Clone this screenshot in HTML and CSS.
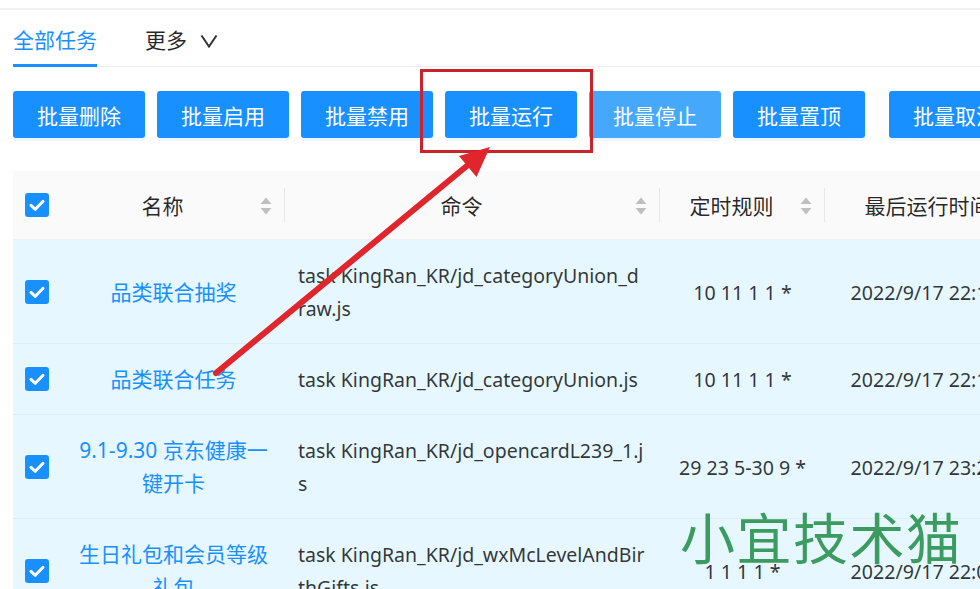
FILE: index.html
```html
<!DOCTYPE html>
<html lang="zh-CN">
<head>
<meta charset="utf-8">
<title>任务</title>
<link rel="stylesheet" href="styles.css">
</head>
<body>
<div class="page">
  <div class="topbar"></div>
  <div class="tabs">
    <div class="tab active">全部任务</div>
    <div class="tab more">更多
      <svg class="chev" width="18" height="14" viewBox="0 0 18 14"><path d="M1.5 1.5 L9 12.5 L16.5 1.5" fill="none" stroke="#333" stroke-width="2"/></svg>
    </div>
  </div>
  <div class="toolbar">
    <button class="btn">批量删除</button>
    <button class="btn">批量启用</button>
    <button class="btn">批量禁用</button>
    <button class="btn">批量运行</button>
    <button class="btn hover">批量停止</button>
    <button class="btn">批量置顶</button>
    <button class="btn wide">批量取消置顶</button>
  </div>
  <table class="grid">
    <colgroup>
      <col class="c-check"><col class="c-name"><col class="c-cmd"><col class="c-sched"><col class="c-last">
    </colgroup>
    <thead>
      <tr>
        <th class="check"><span class="cb"><svg width="24" height="24" viewBox="0 0 24 24"><path d="M6 12.3 L10.3 16.3 L18 8.3" fill="none" stroke="#fff" stroke-width="3" stroke-linecap="round" stroke-linejoin="round"/></svg></span></th>
        <th><div class="th"><span class="title">名称</span><span class="sorter"><svg width="12" height="18" viewBox="0 0 12 18"><path d="M6 0.5 L11.5 7 L0.5 7 Z M6 17.5 L11.5 11 L0.5 11 Z" fill="#bfbfbf"/></svg></span></div></th>
        <th><div class="th"><span class="title">命令</span><span class="sorter"><svg width="12" height="18" viewBox="0 0 12 18"><path d="M6 0.5 L11.5 7 L0.5 7 Z M6 17.5 L11.5 11 L0.5 11 Z" fill="#bfbfbf"/></svg></span></div></th>
        <th><div class="th"><span class="title">定时规则</span><span class="sorter"><svg width="12" height="18" viewBox="0 0 12 18"><path d="M6 0.5 L11.5 7 L0.5 7 Z M6 17.5 L11.5 11 L0.5 11 Z" fill="#bfbfbf"/></svg></span></div></th>
        <th class="nodiv"><div class="th"><span class="title">最后运行时间</span><span class="sorter"><svg width="12" height="18" viewBox="0 0 12 18"><path d="M6 0.5 L11.5 7 L0.5 7 Z M6 17.5 L11.5 11 L0.5 11 Z" fill="#bfbfbf"/></svg></span></div></th>
      </tr>
    </thead>
    <tbody>
      <tr>
        <td class="check"><span class="cb"><svg width="24" height="24" viewBox="0 0 24 24"><path d="M6 12.3 L10.3 16.3 L18 8.3" fill="none" stroke="#fff" stroke-width="3" stroke-linecap="round" stroke-linejoin="round"/></svg></span></td>
        <td class="name"><a>品类联合抽奖</a></td>
        <td class="cmd">task KingRan_KR/jd_categoryUnion_draw.js</td>
        <td class="center">10 11 1 1 *</td>
        <td class="center">2022/9/17 22:10:00</td>
      </tr>
      <tr>
        <td class="check"><span class="cb"><svg width="24" height="24" viewBox="0 0 24 24"><path d="M6 12.3 L10.3 16.3 L18 8.3" fill="none" stroke="#fff" stroke-width="3" stroke-linecap="round" stroke-linejoin="round"/></svg></span></td>
        <td class="name"><a>品类联合任务</a></td>
        <td class="cmd">task KingRan_KR/jd_categoryUnion.js</td>
        <td class="center">10 11 1 1 *</td>
        <td class="center">2022/9/17 22:10:00</td>
      </tr>
      <tr>
        <td class="check"><span class="cb"><svg width="24" height="24" viewBox="0 0 24 24"><path d="M6 12.3 L10.3 16.3 L18 8.3" fill="none" stroke="#fff" stroke-width="3" stroke-linecap="round" stroke-linejoin="round"/></svg></span></td>
        <td class="name"><a>9.1-9.30 京东健康一键开卡</a></td>
        <td class="cmd">task KingRan_KR/jd_opencardL239_1.js</td>
        <td class="center">29 23 5-30 9 *</td>
        <td class="center">2022/9/17 23:29:00</td>
      </tr>
      <tr>
        <td class="check"><span class="cb"><svg width="24" height="24" viewBox="0 0 24 24"><path d="M6 12.3 L10.3 16.3 L18 8.3" fill="none" stroke="#fff" stroke-width="3" stroke-linecap="round" stroke-linejoin="round"/></svg></span></td>
        <td class="name"><a>生日礼包和会员等级礼包</a></td>
        <td class="cmd">task KingRan_KR/jd_wxMcLevelAndBirthGifts.js</td>
        <td class="center">1 1 1 1 *</td>
        <td class="center">2022/9/17 22:01:00</td>
      </tr>
    </tbody>
  </table>

  <div class="highlight"></div>
  <svg class="arrow" width="980" height="589" viewBox="0 0 980 589">
    <line x1="216" y1="373" x2="474" y2="160" stroke="#e0262c" stroke-width="6" stroke-linecap="round"/>
    <path d="M490 147 L476.5 177 L459 156 Z" fill="#e0262c"/>
  </svg>
  <div class="watermark">小宜技术猫</div>
</div>
</body>
</html>
```

FILE: styles.css
```css
* { box-sizing: border-box; }
html, body {
  margin: 0;
  padding: 0;
  background: #fff;
  overflow: hidden;
}
body {
  width: 980px;
  height: 589px;
  font-family: "Noto Sans", "Noto Sans CJK SC", sans-serif;
  font-size: 21px;
  color: rgba(0, 0, 0, 0.85);
}
.page {
  position: relative;
  width: 980px;
  height: 589px;
  overflow: hidden;
}
.topbar {
  height: 10px;
  border-bottom: 2px solid #f3f3f3;
}
.tabs {
  display: flex;
  margin-left: 13px;
  height: 57px;
  border-bottom: 1px solid #eeeeee;
  font-family: "Noto Sans CJK SC", sans-serif;
}
.tab {
  display: flex;
  align-items: center;
  padding-top: 2px;
  height: 57px;
  line-height: 33px;
  color: rgba(0, 0, 0, 0.85);
}
.tab.active {
  color: #1890ff;
  border-bottom: 3px solid #1890ff;
  margin-bottom: -1px;
  height: 57px;
  padding-top: 4px;
  width: 84px;
}
.tab.more {
  margin-left: 48px;
}
.chev {
  margin-left: 13px;
  margin-top: 2px;
}
.toolbar {
  display: flex;
  gap: 12px;
  margin-top: 24px;
  padding-left: 13px;
  white-space: nowrap;
}
.btn {
  flex: none;
  width: 132px;
  height: 47px;
  border: none;
  border-radius: 3px;
  background: #1890ff;
  color: #fff;
  font-family: "Noto Sans CJK SC", sans-serif;
  font-size: 21px;
  padding: 0;
  box-shadow: 0 3px 0 rgba(24, 144, 255, 0.08);
}
.btn.hover { background: #45a8fb; }
.btn.wide { width: 175px; margin-left: 12px; text-align: left; padding-left: 24px; }

.grid {
  margin-top: 33px;
  margin-left: 13px;
  width: 1039px;
  table-layout: fixed;
  border-collapse: collapse;
}
.c-check { width: 49px; }
.c-name { width: 223px; }
.c-cmd { width: 375px; }
.c-sched { width: 165px; }
.c-last { width: 227px; }

.grid th {
  background: #fafafa;
  font-weight: 400;
  padding: 18px 13px 17px;
  line-height: 33px;
  border-bottom: 1px solid #f0f0f0;
  position: relative;
  font-family: "Noto Sans CJK SC", sans-serif;
}
.grid th::before {
  content: "";
  position: absolute;
  right: 0;
  top: 17px;
  height: 34px;
  width: 1px;
  background: #e8e8e8;
}
.grid th.check::before, .grid th.nodiv::before { display: none; }
.grid th.check, .grid td.check {
  padding: 0 12px;
  text-align: left;
  vertical-align: middle;
}
.th {
  display: flex;
  align-items: center;
}
.th .title {
  flex: 1;
  text-align: center;
}
.th .sorter {
  margin-left: 10px;
  display: flex;
  align-items: center;
}
.cb {
  display: block;
  width: 24px;
  height: 24px;
  border-radius: 3px;
  background: #1890ff;
}
.cb svg { display: block; }

.grid td {
  background: #e6f7ff;
  padding: 19px 13px 18px;
  line-height: 33px;
  border-bottom: 1px solid #dcedf7;
  vertical-align: middle;
}
.grid td.name {
  text-align: center;
  color: #1890ff;
}
.grid td.name a { color: #1890ff; }
.grid td.cmd {
  word-break: break-all;
  font-size: 19.5px;
  padding-right: 14px;
  color: rgba(0, 0, 0, 0.8);
}
.grid td.center {
  text-align: center;
  white-space: nowrap;
  font-size: 19.6px;
  color: rgba(0, 0, 0, 0.8);
}

.highlight {
  position: absolute;
  left: 420px;
  top: 69px;
  width: 173px;
  height: 84px;
  border: 3.5px solid #c9232b;
}
.arrow {
  position: absolute;
  left: 0;
  top: 0;
  pointer-events: none;
}
.watermark {
  position: absolute;
  left: 680px;
  top: 508px;
  font-family: "Noto Sans CJK SC", sans-serif;
  font-size: 55px;
  line-height: 1;
  color: #3c9b5f;
  letter-spacing: 1.5px;
  white-space: nowrap;
}
```
